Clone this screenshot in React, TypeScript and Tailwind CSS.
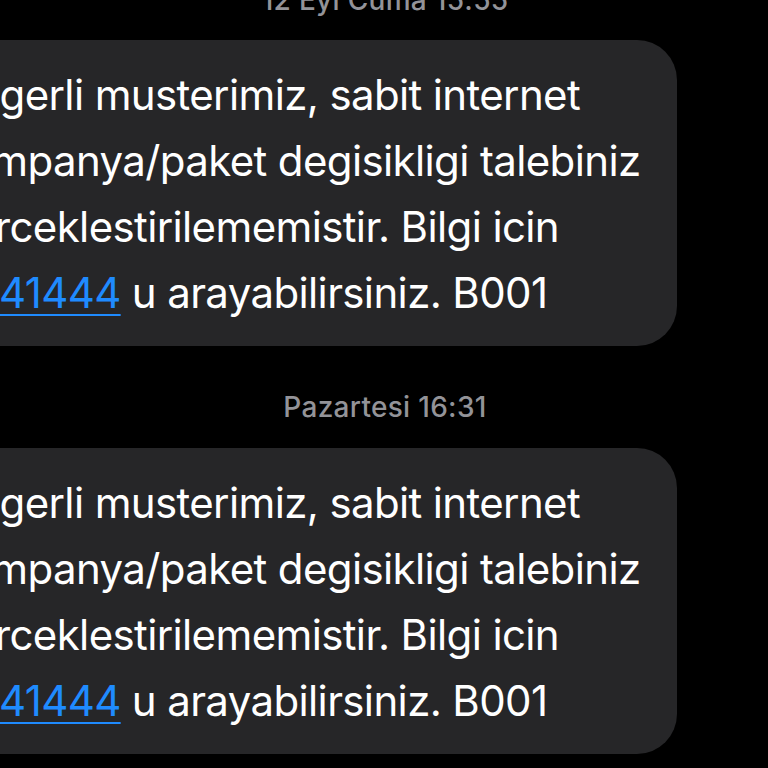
import React from 'react';

const FONT = "font-['Inter','Noto_Sans',sans-serif]";

interface MessageProps {
  className?: string;
}

// One incoming SMS bubble; the left part sits off the visible crop
function Message({ className = '' }: MessageProps) {
  return (
    <div
      className={`ml-[-80px] w-[757px] rounded-[40px] bg-[#262628] pl-[26px] pt-[22px] pb-[20px] text-[42px] leading-[66px] tracking-[-0.63px] text-white whitespace-nowrap ${className}`}
    >
      <div>Degerli musterimiz, sabit internet</div>
      <div>kampanya/paket degisikligi talebiniz</div>
      <div>gerceklestirilememistir. Bilgi icin</div>
      <div>
        <span className="text-[#1f8bff] underline decoration-[2px] underline-offset-[6px]">4441444</span> u arayabilirsiniz. B001
      </div>
    </div>
  );
}

function Stamp({ children, className = '' }: { children: React.ReactNode; className?: string }) {
  return (
    <div className={`w-[770px] text-center text-[28px] leading-[34px] font-medium tracking-[0.3px] text-[#939398] ${className}`}>
      {children}
    </div>
  );
}

export default function App() {
  return (
    <div className={`h-[768px] w-[768px] overflow-hidden bg-black ${FONT}`}>
      <Stamp className="mt-[-17px]">12 Eyl Cuma 15:55</Stamp>
      <Message className="mt-[23px]" />
      <Stamp className="mt-[44px]">Pazartesi 16:31</Stamp>
      <Message className="mt-[24px]" />
    </div>
  );
}
